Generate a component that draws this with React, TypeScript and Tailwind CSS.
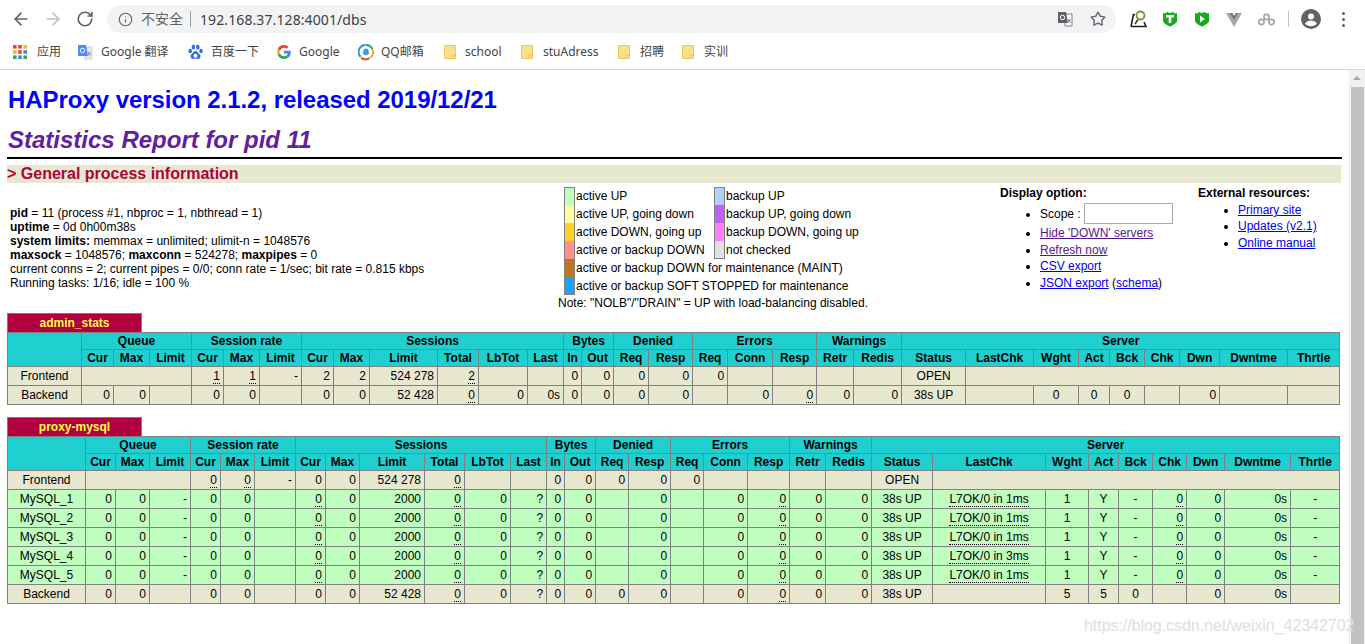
import { ArrowLeft, ArrowRight, RotateCw, Star, Info } from "lucide-react";
import type { ReactNode } from "react";

const uiFont = "font-['Noto_Sans','Noto_Sans_CJK_SC',sans-serif]";

const groups1 = [
  ["Queue", 3],
  ["Session rate", 3],
  ["Sessions", 6],
  ["Bytes", 2],
  ["Denied", 2],
  ["Errors", 3],
  ["Warnings", 2],
  ["Server", 9],
] as const;

const heads = [
  "Cur", "Max", "Limit", "Cur", "Max", "Limit", "Cur", "Max", "Limit", "Total", "LbTot", "Last", "In", "Out", "Req", "Resp",
  "Req", "Conn", "Resp", "Retr", "Redis", "Status", "LastChk", "Wght", "Act", "Bck", "Chk", "Dwn", "Dwntme", "Thrtle",
];

const cols1 = [
  "w-[74px]", "w-[32px]", "w-[36px]", "w-[42px]", "w-[32px]", "w-[36px]", "w-[42px]", "w-[32px]", "w-[36px]", "w-[68px]", "w-[41px]",
  "w-[49px]", "w-[36px]", "w-[18px]", "w-[32px]", "w-[35px]", "w-[44px]", "w-[35px]", "w-[45px]", "w-[44px]", "w-[37px]", "w-[48px]",
  "w-[64px]", "w-[68px]", "w-[45px]", "w-[31px]", "w-[35px]", "w-[35px]", "w-[40px]", "w-[68px]", "w-[52px]",
];

const cols2 = [
  "w-[78px]", "w-[30px]", "w-[34px]", "w-[41px]", "w-[30px]", "w-[34px]", "w-[41px]", "w-[30px]", "w-[34px]", "w-[65px]", "w-[40px]",
  "w-[46px]", "w-[36px]", "w-[18px]", "w-[31px]", "w-[33px]", "w-[42px]", "w-[33px]", "w-[44px]", "w-[42px]", "w-[36px]", "w-[46px]",
  "w-[61px]", "w-[113px]", "w-[43px]", "w-[30px]", "w-[34px]", "w-[34px]", "w-[38px]", "w-[66px]", "w-[49px]",
];

// cell codes: "u:" dotted, "c:" centred, "d:" centred and dotted, "s3"/"s8" an empty spanning cell
const rows1: { name: string; cells: string[] }[] = [
  {
    name: "Frontend",
    cells: ["s3", "u:1", "u:1", "-", "2", "2", "524 278", "u:2", "", "", "0", "0", "0", "0", "0", "", "", "", "", "c:OPEN", "s8"],
  },
  {
    name: "Backend",
    cells: ["0", "0", "", "0", "0", "", "0", "0", "52 428", "u:0", "0", "0s", "0", "0", "0", "0", "", "0", "u:0", "0", "0", "c:38s UP", "", "c:0", "c:0", "c:0", "", "0", "", ""],
  },
];

const server = (name: string, ms: string) => ({
  name,
  green: true,
  cells: ["0", "0", "-", "0", "0", "", "u:0", "0", "2000", "u:0", "0", "?", "0", "0", "", "0", "", "0", "u:0", "0", "0", "c:38s UP", `d:L7OK/0 in ${ms}`, "c:1", "c:Y", "c:-", "u:0", "0", "0s", "c:-"],
});

const rows2: { name: string; green?: boolean; cells: string[] }[] = [
  {
    name: "Frontend",
    cells: ["s3", "u:0", "u:0", "-", "0", "0", "524 278", "u:0", "", "", "0", "0", "0", "0", "0", "", "", "", "", "c:OPEN", "s8"],
  },
  server("MySQL_1", "1ms"),
  server("MySQL_2", "1ms"),
  server("MySQL_3", "1ms"),
  server("MySQL_4", "3ms"),
  server("MySQL_5", "1ms"),
  {
    name: "Backend",
    cells: ["0", "0", "", "0", "0", "", "0", "0", "52 428", "u:0", "0", "?", "0", "0", "0", "0", "", "0", "u:0", "0", "0", "c:38s UP", "", "c:5", "c:5", "c:0", "", "0", "0s", ""],
  },
];

function Cell({ code }: { code: string }) {
  const base = "border border-[#808080] px-[3px] py-0 h-[19px] text-[12px] leading-[14px] overflow-hidden whitespace-nowrap";
  if (code === "s3") return <td colSpan={3} className={base} />;
  if (code === "s8") return <td colSpan={8} className={base} />;
  const tag = code.slice(0, 2);
  const text = tag === "u:" || tag === "c:" || tag === "d:" ? code.slice(2) : code;
  const centered = tag === "c:" || tag === "d:";
  const dotted = tag === "u:" || tag === "d:";
  return (
    <td className={`${base} ${centered ? "text-center" : "text-right"}`}>
      {dotted ? <span className="border-b border-dotted border-black">{text}</span> : text}
    </td>
  );
}

function ProxyTable({ title, cols, rows }: { title: string; cols: string[]; rows: { name: string; green?: boolean; cells: string[] }[] }) {
  return (
    <section>
      <div className="w-[135px] h-[19px] border border-b-0 border-[#808080] bg-[#b00040] text-[#ffff40] text-[12px] font-bold leading-[18px] text-center">
        {title}
      </div>
      <table className="table-fixed border-collapse w-[1333px] text-black">
        <colgroup>
          {cols.map((c, i) => (
            <col key={i} className={c} />
          ))}
        </colgroup>
        <thead className="bg-[#20d0d0]">
          <tr>
            <th rowSpan={2} className="border border-[#808080] p-0" />
            {groups1.map(([label, span]) => (
              <th key={label} colSpan={span} className="border border-[#808080] p-0 h-[17px] text-[12px] leading-[14px] font-bold text-center">
                {label}
              </th>
            ))}
          </tr>
          <tr>
            {heads.map((h, i) => (
              <th key={i} className="border border-[#808080] p-0 h-[17px] text-[12px] leading-[14px] font-bold text-center">
                {h}
              </th>
            ))}
          </tr>
        </thead>
        <tbody>
          {rows.map((r) => (
            <tr key={r.name} className={r.green ? "bg-[#c0ffc0]" : "bg-[#e8e8d0]"}>
              <td className="border border-[#808080] p-0 h-[19px] text-[12px] leading-[14px] text-center">{r.name}</td>
              {r.cells.map((c, i) => (
                <Cell key={i} code={c} />
              ))}
            </tr>
          ))}
        </tbody>
      </table>
    </section>
  );
}

function Swatch({ color, className = "" }: { color: string; className?: string }) {
  return <span className={`w-[11px] h-[18px] shrink-0 border-x border-[#808080] ${color} ${className}`} />;
}

function LegendRow({ a, aColor, b, bColor, aClass, bClass }: { a: string; aColor: string; b?: string; bColor?: string; aClass?: string; bClass?: string }) {
  return (
    <div className="flex h-[18px] items-center pl-[6px] whitespace-nowrap">
      <Swatch color={aColor} className={aClass} />
      <span className={`pl-[1px] ${b ? "w-[139px]" : ""}`}>{a}</span>
      {b && bColor && <Swatch color={bColor} className={bClass} />}
      {b && <span className="pl-[1px]">{b}</span>}
    </div>
  );
}

function InfoBlock() {
  return (
    <div className="mt-[1px] flex items-center h-[127px] text-[12px] leading-[14px] text-black">
      <div className="w-[551px] shrink-0 pl-[3px]">
        <div><b>pid</b> = 11 (process #1, nbproc = 1, nbthread = 1)</div>
        <div><b>uptime</b> = 0d 0h00m38s</div>
        <div><b>system limits:</b> memmax = unlimited; ulimit-n = 1048576</div>
        <div><b>maxsock</b> = 1048576; <b>maxconn</b> = 524278; <b>maxpipes</b> = 0</div>
        <div>current conns = 2; current pipes = 0/0; conn rate = 1/sec; bit rate = 0.815 kbps</div>
        <div>Running tasks: 1/16; idle = 100 %</div>
      </div>
      <div className="w-[442px] shrink-0 self-start pt-[3px]">
        <LegendRow a="active UP" aColor="bg-[#c0ffc0]" aClass="border-t" b="backup UP" bColor="bg-[#b0d0ff]" bClass="border-t" />
        <LegendRow a="active UP, going down" aColor="bg-[#ffffa0]" b="backup UP, going down" bColor="bg-[#c060ff]" />
        <LegendRow a="active DOWN, going up" aColor="bg-[#ffd020]" b="backup DOWN, going up" bColor="bg-[#ff80ff]" />
        <LegendRow a="active or backup DOWN" aColor="bg-[#ff9090]" b="not checked" bColor="bg-[#e0e0e0]" bClass="border-b" />
        <LegendRow a="active or backup DOWN for maintenance (MAINT)" aColor="bg-[#c07820]" />
        <LegendRow a="active or backup SOFT STOPPED for maintenance" aColor="bg-[#20a0ff]" aClass="border-b" />
        <div className="h-[16px] leading-[16px] whitespace-nowrap">Note: "NOLB"/"DRAIN" = UP with load-balancing disabled.</div>
      </div>
      <div className="w-[198px] shrink-0 self-start pt-[2px]">
        <b className="block leading-[14px]">Display option:</b>
        <ul className="list-disc pl-[40px] mt-[3px]">
          <li className="h-[21px]">
            <span className="inline-flex items-center gap-[3px]">
              Scope : <span className="inline-block w-[89px] h-[21px] border border-[#a9a9a9] bg-white" />
            </span>
          </li>
          <li className="mt-[2px]"><a className="text-[#551a8b] underline">Hide 'DOWN' servers</a></li>
          <li className="mt-[2.67px]"><a className="text-[#551a8b] underline">Refresh now</a></li>
          <li className="mt-[2.67px]"><a className="text-[#0000ee] underline">CSV export</a></li>
          <li className="mt-[2.67px]"><a className="text-[#0000ee] underline">JSON export</a> (<a className="text-[#0000ee] underline">schema</a>)</li>
        </ul>
      </div>
      <div className="self-start pt-[2px] whitespace-nowrap">
        <b className="block leading-[14px]">External resources:</b>
        <ul className="list-disc pl-[40px]">
          <li className="mt-[3px]"><a className="text-[#0000ee] underline">Primary site</a></li>
          <li className="mt-[2px]"><a className="text-[#0000ee] underline">Updates (v2.1)</a></li>
          <li className="mt-[3px]"><a className="text-[#0000ee] underline">Online manual</a></li>
        </ul>
      </div>
    </div>
  );
}

const AppsIcon = () => (
  <svg width="14" height="14" viewBox="0 0 14 14">
    {["#ea4335", "#ea4335", "#fbbc04", "#fbbc04", "#ea4335", "#4285f4", "#34a853", "#4285f4", "#34a853"].map((c, i) => (
      <rect key={i} x={(i % 3) * 5.2} y={Math.floor(i / 3) * 5.2} width="3.6" height="3.6" fill={c} />
    ))}
  </svg>
);

const TranslateIcon = ({ dark = false }: { dark?: boolean }) => (
  <svg width="16" height="16" viewBox="0 0 16 16">
    <path d="M7 3h8v12H8z" fill={dark ? "#fff" : "#e8e8e8"} stroke={dark ? "#5f6368" : "#c8c8c8"} strokeWidth="0.8" />
    <path d="M1 1h8l2 11H1z" fill={dark ? "#5f6368" : "#4d8df5"} />
    <circle cx="5.5" cy="6.5" r="2.2" fill="none" stroke="#fff" strokeWidth="1" />
    <path d="M11 8l2.5 3.5M13.5 8L11 11.5" stroke={dark ? "#5f6368" : "#777"} strokeWidth="0.9" />
  </svg>
);

const PawIcon = () => (
  <svg width="15" height="16" viewBox="0 0 15 16" fill="#2f6fe4">
    <ellipse cx="2.2" cy="7" rx="1.8" ry="2.3" />
    <ellipse cx="5.4" cy="3" rx="1.8" ry="2.5" />
    <ellipse cx="9.8" cy="3" rx="1.8" ry="2.5" />
    <ellipse cx="13" cy="7" rx="1.7" ry="2.3" />
    <path d="M7.5 7C5.5 7 5 9.2 3.5 10.3 1.8 11.6 2.6 15 5 15c1 0 1.5-.4 2.5-.4s1.6.4 2.6.4c2.5 0 3.2-3.4 1.5-4.7C10 9.2 9.6 7 7.5 7z" />
    <ellipse cx="7.500" cy="11.800" rx="2" ry="2" fill="#fff" />
  </svg>
);

const GoogleIcon = () => (
  <svg width="14" height="14" viewBox="0 0 48 48">
    <path fill="#ea4335" d="M24 9.5c3.5 0 6.7 1.3 9.100 3.400l6.800-6.800C35.800 2.400 30.300 0 24 0 14.600 0 6.500 5.400 2.600 13.200l7.900 6.200C12.400 13.700 17.700 9.500 24 9.500z" />
    <path fill="#4285f4" d="M46.900 24.500c0-1.600-.100-3.100-.400-4.500H24v9h12.900c-.600 3-2.200 5.500-4.700 7.200l7.700 6c4.500-4.200 7-10.300 7-17.700z" />
    <path fill="#fbbc05" d="M10.500 28.600c-.500-1.400-.800-3-.800-4.600s.300-3.200.800-4.600l-7.900-6.200C.900 16.500 0 20.100 0 24s.900 7.500 2.600 10.800l7.900-6.200z" />
    <path fill="#34a853" d="M24 48c6.500 0 11.900-2.100 15.900-5.800l-7.700-6c-2.200 1.500-5 2.300-8.200 2.300-6.300 0-11.600-4.200-13.500-9.900l-7.900 6.200C6.500 42.600 14.600 48 24 48z" />
  </svg>
);

const QQIcon = () => (
  <svg width="16" height="18" viewBox="0 0 16 18" fill="none">
    <path d="M8 2a7 7 0 0 1 6.500 4.300" stroke="#2fa84f" strokeWidth="2" />
    <path d="M14.700 7a7 7 0 0 1-2.500 7.700" stroke="#f5a623" strokeWidth="2" />
    <path d="M11.500 15.200A7 7 0 0 1 3 14.500" stroke="#e8452c" strokeWidth="2" />
    <path d="M2.500 13.800A7 7 0 0 1 7.500 2" stroke="#2f8fe0" strokeWidth="2" />
    <path d="M8 5.500c-1.700 0-2.600 1.300-2.600 2.800 0 1-.7 1.900-.7 2.700 0 .6.800.2 1.100-.2.500 1 1.300 1.500 2.200 1.500s1.700-.5 2.200-1.500c.3.400 1.100.8 1.100.2 0-.8-.7-1.700-.7-2.700C10.600 6.800 9.700 5.500 8 5.500z" fill="#3a9be8" />
  </svg>
);

const FolderIcon = () => (
  <svg width="12" height="14" viewBox="0 0 12 14">
    <path d="M.5.5h11v13H.5z" fill="#fbe08c" stroke="#eec75b" />
    <path d="M8 13.500v-3h3.500" fill="none" stroke="#eec75b" />
  </svg>
);

const SearchPenIcon = () => (
  <svg width="17" height="18" viewBox="0 0 17 18" fill="none">
    <path d="M1 16.500h15l-2-4.500M1 16.500l2.500-12h1.500" stroke="#1d1d1d" strokeWidth="1.600" />
    <circle cx="10.500" cy="5.500" r="4" stroke="#6f9a3a" strokeWidth="1.800" />
    <path d="M8 9.500l-3 4.500" stroke="#444" strokeWidth="1.700" />
  </svg>
);

const ShieldIcon = ({ children }: { children: ReactNode }) => (
  <svg width="16" height="16" viewBox="0 0 16 16">
    <path d="M1 2l2.300.600L5 1l3 1 3-1 1.700 1.600L15 2v7.500c0 2.500-3.500 4.500-7 6-3.500-1.500-7-3.500-7-6z" fill="#13ad19" />
    {children}
  </svg>
);

const VueIcon = () => (
  <svg width="16" height="15" viewBox="0 0 16 15">
    <path d="M0 1h6l2 3.400L10 1h6L8 15z" fill="#a8a8a8" />
    <path d="M4 1h2.300L8 4l1.700-3H12L8 8z" fill="#747474" />
  </svg>
);

const GearsIcon = () => (
  <svg width="17" height="13" viewBox="0 0 17 13" fill="none" stroke="#a6a6a6" strokeWidth="1.700">
    <circle cx="8.500" cy="4" r="2.600" />
    <circle cx="3.500" cy="9" r="2.600" />
    <circle cx="13.500" cy="9" r="2.600" />
  </svg>
);

const Avatar = () => (
  <svg width="20" height="20" viewBox="0 0 20 20">
    <circle cx="10" cy="10" r="10" fill="#5f6368" />
    <circle cx="10" cy="7.500" r="3" fill="#fff" />
    <path d="M4 14.500c1.200-2 3.800-3 6-3s4.800 1 6 3c-1.400 1.800-3.600 2.800-6 2.800s-4.600-1-6-2.800z" fill="#fff" />
  </svg>
);

const bookmarks: { icon: ReactNode; label: string; iconGap: string; slot: string }[] = [
  { icon: <AppsIcon />, label: "应用", iconGap: "ml-[10px]", slot: "w-[64px]" },
  { icon: <TranslateIcon />, label: "Google 翻译", iconGap: "ml-[8px]", slot: "w-[111px]" },
  { icon: <PawIcon />, label: "百度一下", iconGap: "ml-[8px]", slot: "w-[89px]" },
  { icon: <GoogleIcon />, label: "Google", iconGap: "ml-[8px]", slot: "w-[81px]" },
  { icon: <QQIcon />, label: "QQ邮箱", iconGap: "ml-[7px]", slot: "w-[86px]" },
  { icon: <FolderIcon />, label: "school", iconGap: "ml-[9px]", slot: "w-[77px]" },
  { icon: <FolderIcon />, label: "stuAdress", iconGap: "ml-[10px]", slot: "w-[97px]" },
  { icon: <FolderIcon />, label: "招聘", iconGap: "ml-[10px]", slot: "w-[64px]" },
  { icon: <FolderIcon />, label: "实训", iconGap: "ml-[10px]", slot: "w-[60px]" },
];

function BrowserChrome() {
  return (
    <header className={`${uiFont} shrink-0 h-[70px] bg-white border-b border-[#d8d8d8]`}>
      <div className="h-[38px] flex items-start">
        <div className="w-[107px] shrink-0 h-[38px] flex items-center pl-[11px] gap-[12px]">
          <ArrowLeft size={20} strokeWidth={2} className="text-[#5f6368]" />
          <ArrowRight size={20} strokeWidth={2} className="text-[#bdc1c6]" />
          <RotateCw size={18} strokeWidth={2.2} className="text-[#5f6368] ml-[1px]" />
        </div>
        <div className="w-[1009px] shrink-0 h-[28px] mt-[5px] rounded-full bg-[#f1f3f4] flex items-center pl-[11px] pr-[10px] text-[14px]">
          <Info size={15} strokeWidth={1.8} className="text-[#5f6368]" />
          <span className="ml-[8px] text-[#5f6368] text-[14px] leading-none">不安全</span>
          <span className="ml-[7px] w-px h-[16px] bg-[#9aa0a6]" />
          <span className="ml-[9px] text-[#3c4043] tracking-[0.1px]">192.168.37.128:4001/dbs</span>
          <span className="ml-auto flex items-center gap-[17px]">
            <TranslateIcon dark />
            <Star size={16} strokeWidth={2} className="text-[#5f6368]" />
          </span>
        </div>
        <div className="flex items-center h-[38px] pl-[14px]">
          <SearchPenIcon />
          <span className="ml-[15px]">
            <ShieldIcon>
              <path d="M4 4h8v2.500H9.300V12H6.700V6.500H4z" fill="#fff" />
            </ShieldIcon>
          </span>
          <span className="ml-[16px]">
            <ShieldIcon>
              <path d="M6 4.500l5 3.500-5 3.500z" fill="#fff" />
            </ShieldIcon>
          </span>
          <span className="ml-[16px]"><VueIcon /></span>
          <span className="ml-[16px]"><GearsIcon /></span>
          <span className="ml-[13px] w-px h-[16px] bg-[#c4c4c4]" />
          <span className="ml-[12px]"><Avatar /></span>
          <span className="ml-[21px] flex flex-col gap-[3px]">
            <i className="w-[3px] h-[3px] rounded-full bg-[#5f6368]" />
            <i className="w-[3px] h-[3px] rounded-full bg-[#5f6368]" />
            <i className="w-[3px] h-[3px] rounded-full bg-[#5f6368]" />
          </span>
        </div>
      </div>
      <nav className="h-[27px] flex items-center pl-[13px] text-[12px] text-[#444]">
        {bookmarks.map((b) => (
          <div key={b.label} className={`flex items-center shrink-0 ${b.slot}`}>
            {b.icon}
            <span className={`${b.iconGap} whitespace-nowrap`}>{b.label}</span>
          </div>
        ))}
      </nav>
    </header>
  );
}

export default function App() {
  return (
    <div className="relative h-[644px] w-[1365px] overflow-hidden bg-white flex flex-col font-['Liberation_Sans','Noto_Sans_CJK_SC',sans-serif]">
      <BrowserChrome />
      <div className="flex-1 flex min-h-0">
        <main className="w-[1349px] shrink-0 pl-[7px] pr-[8px] pt-[16px]">
          <h1 className="text-[24px] leading-[28px] font-bold text-[#0000ff] pl-px tracking-[-0.05px]">HAProxy version 2.1.2, released 2019/12/21</h1>
          <h2 className="mt-[12px] text-[24px] leading-[28px] font-bold italic text-[#6020a0] pl-px">Statistics Report for pid 11</h2>
          <hr className="mt-[3px] h-[2px] border-0 bg-black w-[1335px]" />
          <h3 className="mt-[6px] h-[18px] bg-[#e8e8d0] text-[16px] leading-[18px] font-bold text-[#b00040]">&gt; General process information</h3>
          <InfoBlock />
          <div className="mt-[2px]">
            <ProxyTable title="admin_stats" cols={cols1} rows={rows1} />
          </div>
          <div className="mt-[12px]">
            <ProxyTable title="proxy-mysql" cols={cols2} rows={rows2} />
          </div>
        </main>
        <aside className="w-[16px] shrink-0 bg-[#f1f1f1] flex flex-col items-center">
          <span className="mt-[6px] w-0 h-0 border-x-[4px] border-x-transparent border-b-[4px] border-b-[#a3a3a3]" />
          <span className="mt-[7px] w-[13px] flex-1 bg-[#c1c1c1]" />
        </aside>
      </div>
      <span className="absolute left-[1084px] top-[616px] text-[16px] leading-[20px] tracking-[-0.05px] text-[#dedede] whitespace-nowrap">
        https://blog.csdn.net/weixin_42342702
      </span>
    </div>
  );
}
